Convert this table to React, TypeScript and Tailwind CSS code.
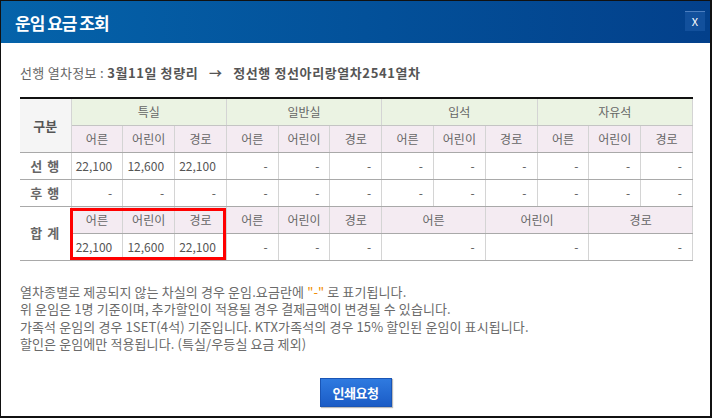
const groups = ["특실", "일반실", "입석", "자유석"];
const ages = ["어른", "어린이", "경로"];

const rows = [
  {
    label: "선 행",
    values: ["22,100", "12,600", "22,100", "-", "-", "-", "-", "-", "-", "-", "-", "-"],
  },
  {
    label: "후 행",
    values: ["-", "-", "-", "-", "-", "-", "-", "-", "-", "-", "-", "-"],
  },
];

const totalValues = ["22,100", "12,600", "22,100", "-", "-", "-"];

const notes = [
  <>
    열차종별로 제공되지 않는 차실의 경우 운임.요금란에{" "}
    <span className="text-[#f08c00]">"-"</span> 로 표기됩니다.
  </>,
  <>위 운임은 1명 기준이며, 추가할인이 적용될 경우 결제금액이 변경될 수 있습니다.</>,
  <>가족석 운임의 경우 1SET(4석) 기준입니다. KTX가족석의 경우 15% 할인된 운임이 표시됩니다.</>,
  <>할인은 운임에만 적용됩니다. (특실/우등실 요금 제외)</>,
];

const cell = "border-r border-b border-r-[#d4d4d4] border-b-[#a9a9a9] p-0";

export default function App() {
  return (
    <div className="w-[712px] h-[418px] bg-white border-t border-l border-r-2 border-b-2 border-[#111] flex flex-col font-['Noto_Sans_CJK_KR',sans-serif] overflow-hidden">
      <div className="h-[42px] shrink-0 flex items-center justify-between pl-[14px] pr-[5px] bg-gradient-to-r from-[#0563aa] to-[#03408b]">
        <span className="text-white font-bold text-[17px] tracking-[-1px] leading-none">
          운임 요금 조회
        </span>
        <button className="w-[20px] h-[20px] flex items-center justify-center bg-[#12509c] border-t border-t-[#4d7fc0] text-white text-[11px] leading-none -mt-[2px]">
          X
        </button>
      </div>

      <div className="px-[19px] flex flex-col flex-1">
        <div className="mt-[21px] text-[13px] leading-[18px] text-[#666] whitespace-pre tracking-[0.3px]">
          선행 열차정보 :{" "}
          <span className="font-bold text-[#555] tracking-[0.6px]">
            3월11일 청량리{"   "}→{"   "}정선행 정선아리랑열차2541열차
          </span>
        </div>

        <div className="relative mt-[15px]">
          <table className="w-[673px] table-fixed border-collapse border-t-2 border-t-[#111] text-[12px] text-[#666]">
            <colgroup>
              <col className="w-[51px]" />
              {Array.from({ length: 12 }).map((_, i) => (
                <col key={i} />
              ))}
            </colgroup>
            <thead>
              <tr className="h-[27px]">
                <th rowSpan={2} className={`${cell} bg-[#f5f5f5] text-[13px] font-bold text-[#555]`}>
                  구분
                </th>
                {groups.map((g) => (
                  <th key={g} colSpan={3} className={`${cell} border-b-[#c4c4c4] bg-[#ebf3e3] font-normal`}>
                    {g}
                  </th>
                ))}
              </tr>
              <tr className="h-[27px]">
                {groups.map((g) =>
                  ages.map((a) => (
                    <th key={g + a} className={`${cell} bg-[#f4ebf2] font-normal`}>
                      {a}
                    </th>
                  ))
                )}
              </tr>
            </thead>
            <tbody>
              {rows.map((r) => (
                <tr key={r.label} className="h-[27px]">
                  <th className={`${cell} font-bold text-[13px] text-[#666] whitespace-pre tracking-[1px]`}>{r.label}</th>
                  {r.values.map((v, i) => (
                    <td key={i} className={`${cell} text-right pr-[10px] text-[#555]`}>
                      {v}
                    </td>
                  ))}
                </tr>
              ))}
              <tr className="h-[27px]">
                <th rowSpan={2} className={`${cell} font-bold text-[13px] text-[#666] whitespace-pre tracking-[1px]`}>
                  합 계
                </th>
                {[0, 1].map((g) =>
                  ages.map((a) => (
                    <td key={g + a} className={`${cell} bg-[#f4ebf2] text-center`}>
                      {a}
                    </td>
                  ))
                )}
                {ages.map((a) => (
                  <td key={"m" + a} colSpan={2} className={`${cell} bg-[#f4ebf2] text-center`}>
                    {a}
                  </td>
                ))}
              </tr>
              <tr className="h-[27px]">
                {totalValues.map((v, i) => (
                  <td key={i} className={`${cell} text-right pr-[10px] text-[#555]`}>
                    {v}
                  </td>
                ))}
                {[0, 1, 2].map((i) => (
                  <td key={"t" + i} colSpan={2} className={`${cell} text-right pr-[10px] text-[#555]`}>
                    -
                  </td>
                ))}
              </tr>
            </tbody>
          </table>
          <div className="absolute left-[50px] top-[111px] w-[156px] h-[52px] border-[3px] border-[#ff0000] pointer-events-none" />
        </div>

        <div className="mt-[22px] text-[13px] leading-[17.5px] text-[#6a6a6a] tracking-[0.1px]">
          {notes.map((n, i) => (
            <p key={i}>{n}</p>
          ))}
        </div>

        <div className="flex justify-center mt-auto mb-[9px]">
          <button className="w-[72px] h-[29px] bg-gradient-to-b from-[#2f7ae0] to-[#1b5cc6] border border-[#1a55b5] shadow-[1px_1px_1px_#bbb] text-white text-[13px] font-bold tracking-[-0.5px]">
            인쇄요청
          </button>
        </div>
      </div>
    </div>
  );
}
